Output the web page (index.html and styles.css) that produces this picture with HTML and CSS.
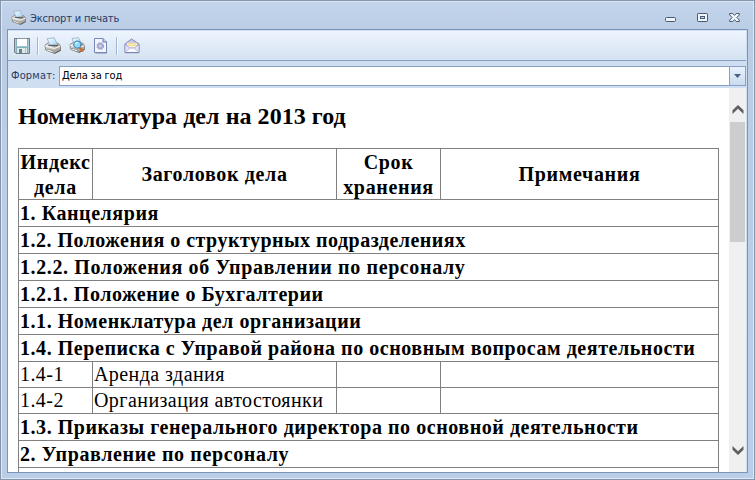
FILE: index.html
```
<!DOCTYPE html>
<html lang="ru">
<head>
<meta charset="utf-8">
<title>Экспорт и печать</title>
<link rel="stylesheet" href="styles.css">
</head>
<body>
<svg width="0" height="0" class="defs">
  <defs>
    <linearGradient id="paper" x1="0" y1="0" x2="1" y2="1"><stop offset="0" stop-color="#f4fbff"/><stop offset="1" stop-color="#a2d6f3"/></linearGradient>
    <linearGradient id="metal" x1="0" y1="0" x2="1" y2="1"><stop offset="0" stop-color="#ecece8"/><stop offset="1" stop-color="#90908d"/></linearGradient>
    <symbol id="printer" viewBox="0 0 16 16">
      <path d="M1 7.5 L4 5.5 L13.5 6 L15.5 8.5 V12.5 L10 15.5 L1.5 12 Z" fill="url(#metal)" stroke="#777775" stroke-width=".8"/>
      <path d="M3 1.5 L9.5 .7 L12.5 6.5 L5.5 8 Z" fill="url(#paper)" stroke="#8fa9bb" stroke-width=".7"/>
      <path d="M1 8.2 L9.6 10.8 L15.3 8.8" fill="none" stroke="#f8f8f6"/>
      <path d="M4 7.8 L11.5 8.4 L13.2 7.5" fill="none" stroke="#54585b" stroke-width="1.1"/>
      <path d="M3 11.2 L9 13.3 L7.6 14.6 L2.2 12.6 Z" fill="#fff" stroke="#77716a" stroke-width=".6"/>
      <path d="M10 15.4 L15.6 12.4" stroke="#656565"/>
    </symbol>
  </defs>
</svg>
<div class="window">
  <header class="titlebar">
    <svg class="app-icon" width="15" height="15"><use href="#printer"/></svg>
    <span class="title">Экспорт и печать</span>
    <div class="controls">
      <svg width="12" height="12" viewBox="0 0 12 12"><rect x=".5" y="5.5" width="10" height="4" rx="1" fill="#eef4fb" stroke="#4b5870"/></svg>
      <svg width="12" height="12" viewBox="0 0 12 12"><rect x=".5" y="1.5" width="10" height="8" rx=".7" fill="#eef4fb" stroke="#4b5870"/><rect x="3.5" y="4.5" width="4" height="2" fill="#c8d7ea" stroke="#4b5870"/></svg>
      <svg width="12" height="12" viewBox="0 0 12 12"><path d="M.7 1.5H3.8L5.5 3.4L7.2 1.5H10.3V3L7.8 5.5L10.3 8V9.5H7.2L5.5 7.6L3.8 9.5H.7V8L3.2 5.5L.7 3Z" fill="#eef4fb" stroke="#4b5870"/></svg>
    </div>
  </header>
  <main class="client">
    <div class="toolbar">
      <svg class="save" width="16" height="16" viewBox="0 0 16 16"><path d="M.5 .5H15.5V15.5H2L.5 14Z" fill="#86aebd" stroke="#717d84"/><rect x="3" y="1" width="10" height="7" fill="#fff"/><path d="M3 .5H13" stroke="#8e999e"/><path d="M2 8.5H14" stroke="#9fc3d0"/><rect x="3" y="10" width="10" height="5" fill="#dfe7e9"/><rect x="5" y="11" width="3" height="4" fill="#5f8796"/><path d="M11.5 10V15" stroke="#b2c3ca"/><path d="M1.5 1V14M14.5 1V15" stroke="#a9ccd7"/></svg>
      <i class="sep"></i>
      <svg class="print" width="17" height="17"><use href="#printer"/></svg>
      <svg class="preview" width="17" height="17" viewBox="0 0 17 17"><use href="#printer" width="16" height="16"/><path d="M10.5 10.5L14 14.5" stroke="#ce6c2b" stroke-width="2.6"/><circle cx="8.3" cy="7.6" r="3.5" fill="#91dcfa" stroke="#4e91b9" stroke-width="1.1"/><path d="M6.3 7.2Q7 5.3 9 5.5" stroke="#fff" fill="none"/></svg>
      <svg class="page" width="14" height="16" viewBox="0 0 14 16"><path d="M1.5 1.5H9.5L13 5V15.5H1.5Z" fill="#8188a0"/><path d="M.5 .5H9L12.5 4V14.5H.5Z" fill="#f0f5ff" stroke="#7688b5"/><path d="M9 .5V4H12.5" fill="#c5d1ec" stroke="#6177aa"/><circle cx="6.3" cy="8" r="3" fill="#b4b4da" stroke="#a0a2cb" stroke-width="1.6" stroke-dasharray="1.8 .55"/><circle cx="6.3" cy="8" r="1.1" fill="#d6d8f0"/></svg>
      <i class="sep second"></i>
      <svg class="mail" width="16" height="16" viewBox="0 0 16 16"><path d="M1 6L7.5 1L15 6V14.5H1Z" fill="#c7c8f1" stroke="#8587b5"/><path d="M3 5.2H13V10H3Z" fill="#fffef0"/><path d="M3.5 5.5H12.5M3 7.5H13" stroke="#efdc94" stroke-width="1.3"/><path d="M1 6.4L5.8 10H10.2L15 6.4V14.5H1Z" fill="#e4e4fc" stroke="#9193c0" stroke-width=".7"/><path d="M1.5 14L5.8 10H10.2L14.5 14" fill="#f8f8ff" stroke="#a4a6cc" stroke-width=".8"/><path d="M1 14.7H15" stroke="#777ba4"/></svg>
    </div>
    <div class="format">
      <label class="format-label">Формат:</label>
      <div class="combo"><span class="value">Дела за год</span><div class="drop"><svg width="7" height="4" viewBox="0 0 7 4"><path d="M0 0H7L3.5 4Z" fill="#4c5f86"/></svg></div></div>
    </div>
    <div class="viewer">
      <article class="document">
        <h1>Номенклатура дел на 2013 год</h1>
        <table>
          <colgroup><col class="c1"><col class="c2"><col class="c3"><col class="c4"></colgroup>
          <tr class="head"><th>Индекс<br>дела</th><th>Заголовок дела</th><th>Срок<br>хранения</th><th>Примечания</th></tr>
          <tr class="group"><td colspan="4">1. Канцелярия</td></tr>
          <tr class="group tight"><td colspan="4">1.2. Положения о структурных подразделениях</td></tr>
          <tr class="group loose"><td colspan="4">1.2.2. Положения об Управлении по персоналу</td></tr>
          <tr class="group"><td colspan="4">1.2.1. Положение о Бухгалтерии</td></tr>
          <tr class="group"><td colspan="4">1.1. Номенклатура дел организации</td></tr>
          <tr class="group"><td colspan="4">1.4. Переписка с Управой района по основным вопросам деятельности</td></tr>
          <tr class="item"><td>1.4-1</td><td>Аренда здания</td><td></td><td></td></tr>
          <tr class="item"><td>1.4-2</td><td>Организация автостоянки</td><td></td><td></td></tr>
          <tr class="group"><td colspan="4">1.3. Приказы генерального директора по основной деятельности</td></tr>
          <tr class="group loose"><td colspan="4">2. Управление по персоналу</td></tr>
          <tr class="group"><td colspan="4"></td></tr>
        </table>
      </article>
      <div class="scrollbar">
        <svg class="up" width="12" height="10" viewBox="0 0 12 10"><path d="M.5 5.2L6 0L11.5 5.2V9L6 3.8L.5 9Z" fill="#606060"/></svg>
        <div class="thumb"></div>
        <svg class="down" width="12" height="10" viewBox="0 0 12 10"><path d="M.5 0L6 5.2L11.5 0V3.8L6 9L.5 3.8Z" fill="#606060"/></svg>
      </div>
    </div>
  </main>
</div>
</body>
</html>
```
FILE: styles.css
```
* { box-sizing: border-box; }
body { margin: 0; overflow: hidden; font-family: "DejaVu Sans Condensed", "DejaVu Sans", sans-serif; font-size: 11px; }
svg { display: block; flex: none; }
.defs { position: absolute; }
.window { width: 755px; height: 480px; border: 1px solid #8795aa; box-shadow: inset 0 0 0 1px #dce8f6; padding: 0 6px 7px; background: linear-gradient(#c3d4eb, #bacde5 30px, #bbcee7); }
.titlebar { height: 28px; display: flex; align-items: center; padding: 6px 7px 0 4px; color: #263c68; }
.app-icon { margin: -2px 4px 0 0; }
.title { flex: 1; white-space: nowrap; letter-spacing: -.16px; }
.controls { display: flex; gap: 20px; }
.client { height: 444px; border: 1px solid #7895b8; background: #cfdef0; padding-top: 1px; display: flex; flex-direction: column; }
.toolbar { height: 30px; flex: none; margin-right: 1px; border-bottom: 1px solid #879fc2; background: linear-gradient(#edf4fe, #d4e2f1); display: flex; align-items: center; padding-left: 6px; }
.sep { width: 2px; height: 18px; margin: 0 6px 0 7px; background: linear-gradient(90deg, #9eb4d1 50%, #f8fbff 50%); }
.print { margin-left: -1px; }
.preview { margin-left: 8px; }
.page { margin-left: 8px; }
.second { margin-left: 8px; margin-right: 6px; }
.format { height: 27px; flex: none; display: flex; align-items: center; padding: 2px 1px 0 3px; color: #263c68; }
.format-label { width: 48px; letter-spacing: .15px; }
.combo { height: 20px; flex: 1; display: flex; background: #fff; border: 1px solid #87a0c3; color: #000; }
.value { flex: 1; line-height: 18px; padding-left: 2px; letter-spacing: -.16px; }
.drop { width: 16px; border-left: 1px solid #87a0c3; background: linear-gradient(#e9f2fd, #c9dbee); display: grid; place-items: center; }
.viewer { flex: 1; min-height: 0; display: flex; background: #fff; margin-right: 1px; overflow: hidden; }
.document { flex: 1; overflow: hidden; padding: 0 0 0 10px; font-family: "Liberation Serif", serif; color: #000; }
h1 { margin: 14px 0 17px; font-size: 24px; line-height: 29px; white-space: nowrap; letter-spacing: .05px; }
table { width: 701px; table-layout: fixed; border-collapse: collapse; font-size: 20px; }
.c1 { width: 74px; } .c2 { width: 244px; } .c3 { width: 104px; } .c4 { width: 278px; }
th, td { border: 1px solid #808080; padding: 0 1px; line-height: 25px; white-space: nowrap; }
th { letter-spacing: .65px; line-height: 24.5px; padding: 1px 0 0; }
.head { height: 51px; }
.group { height: 27px; font-weight: bold; letter-spacing: .55px; }
.tight { letter-spacing: .48px; }
.loose { letter-spacing: .62px; }
.item { height: 26px; letter-spacing: .43px; }
.scrollbar { width: 17px; background: #f0f0f0; display: flex; flex-direction: column; align-items: center; padding: 17px 0 16px; }
.thumb { width: 15px; height: 120px; margin-top: 7px; background: #cdcdcd; }
.down { margin-top: auto; }
```
